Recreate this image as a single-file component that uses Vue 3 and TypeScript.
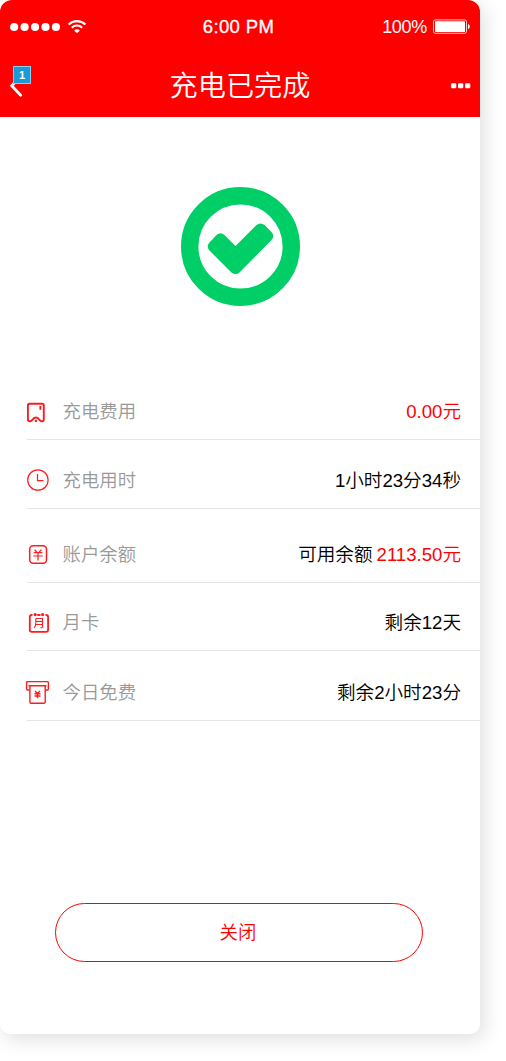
<script setup lang="ts">
interface Row {
  icon: 'bill' | 'clock' | 'yuan' | 'month' | 'free'
  label: string
  value: string
  amount: string
}

const rows: Row[] = [
  { icon: 'bill', label: '充电费用', value: '', amount: '0.00元' },
  { icon: 'clock', label: '充电用时', value: '1小时23分34秒', amount: '' },
  { icon: 'yuan', label: '账户余额', value: '可用余额', amount: '2113.50元' },
  { icon: 'month', label: '月卡', value: '剩余12天', amount: '' },
  { icon: 'free', label: '今日免费', value: '剩余2小时23分', amount: '' },
]
</script>

<template>
  <div class="page">
    <main class="phone">
      <header class="top">
        <div class="status">
          <div class="signal">
            <svg width="52" height="10" viewBox="0 0 52 10" fill="#fff">
              <circle v-for="n in 5" :key="n" :cx="n * 10.45 - 6.3" cy="5" r="4.1" />
            </svg>
            <svg width="18" height="14" viewBox="0 0 18 14" fill="none" stroke="#fff">
              <path d="M.6 4.6C5.4 0 12.600 0 17.400 4.600" stroke-width="2.100" />
              <path d="M3.800 7.700C6.800 4.900 11.200 4.900 14.200 7.700" stroke-width="2" />
              <path d="M6.200 10.400C7.800 8.900 10.200 8.900 11.800 10.400L9 13.300Z" fill="#fff" stroke="none" />
            </svg>
          </div>
          <span class="time">6:00 PM</span>
          <div class="power">
            <span class="percent">100%</span>
            <svg width="38" height="16" viewBox="0 0 38 16">
              <rect x=".5" y=".9" width="33" height="13.400" rx="1.800" fill="none" stroke="#fff" stroke-width=".8" />
              <rect x="2" y="2.300" width="30" height="10.700" rx=".6" fill="#fff" />
              <path d="M35 5C37.300 6 37.300 9.200 35 10.200Z" fill="#fff" />
            </svg>
          </div>
        </div>
        <div class="nav">
          <div class="back">
            <svg width="14" height="24" viewBox="0 0 14 24" fill="none" stroke="#fff" stroke-width="2.800" stroke-linecap="round">
              <path d="M11 3L2.700 11.800L11.700 21.200" />
            </svg>
            <span class="badge">1</span>
          </div>
          <h1>充电已完成</h1>
          <svg class="more" width="20" height="6" viewBox="0 0 20 6" fill="#fff">
            <rect x="0" y=".2" width="5.300" height="5" rx="1.200" />
            <rect x="7" y=".2" width="5.300" height="5" rx="1.200" />
            <rect x="14" y=".2" width="5.300" height="5" rx="1.200" />
          </svg>
        </div>
      </header>

      <svg class="done" width="120" height="120" viewBox="0 0 120 120">
        <circle cx="60.500" cy="59.500" r="50.800" fill="none" stroke="#00cf68" stroke-width="17.400" />
        <path d="M36.500 47.900Q40.500 44.600 44.500 47.900L55.500 58.900L76.500 38.100Q80.500 35 84.500 38.100L91.500 45.100Q95 49.100 91.500 53.100L59.500 85.400Q55.500 88.600 51.500 85.400L29.500 63.600Q26 59.600 29.500 55.600Z" fill="#00cf68" />
      </svg>

      <section class="rows">
        <div v-for="row in rows" :key="row.icon" class="row" :class="row.icon">
          <svg class="icon" width="26" height="26" viewBox="0 0 26 26" fill="none" stroke="#fc1c20">
            <template v-if="row.icon === 'bill'">
              <path d="M4.600 5.800H17Q18.800 5.800 18.800 7.600V21.500Q18.800 23.300 17 23.300H16.500Q15.500 23.300 14.500 21.900Q13 19.500 10.900 19.500Q8.800 19.500 7.300 21.900Q6.300 23.300 5.300 23.300H4.600Q2.900 23.300 2.900 21.500V7.600Q2.900 5.800 4.600 5.800Z" stroke-width="1.900" />
              <path d="M15.400 8V11.800" stroke-width="1.900" />
              <circle cx="10.900" cy="22.900" r="1.200" fill="#fc1c20" stroke="none" />
            </template>
            <template v-else-if="row.icon === 'clock'">
              <circle cx="12.900" cy="13" r="10.200" stroke-width="1.200" />
              <path d="M12.500 7V13.600H18.500" stroke-width="1.200" />
            </template>
            <template v-else-if="row.icon === 'yuan'">
              <rect x="4.700" y="4.800" width="16.800" height="17.500" rx="3.500" stroke-width="1.500" />
              <path d="M9.600 8.700L12 11.500M16.300 8.700L14 11.500M8.700 11.700H17.300M8.300 15H17.700M13 11.700V19.500" stroke-width="1.200" />
            </template>
            <template v-else-if="row.icon === 'month'">
              <path d="M7.500 6H7Q4.800 6 4.800 8.200V20.800Q4.800 22.900 7 22.900H21Q23.100 22.900 23.100 20.800V8.200Q23.100 6 21 6H20.500M12.300 6H15.500" stroke-width="1.800" />
              <circle cx="10.200" cy="5.600" r="1.600" fill="#fc1c20" stroke="none" />
              <circle cx="17.600" cy="5.600" r="1.600" fill="#fc1c20" stroke="none" />
              <path d="M10.800 9.500H17.500V17.800Q17.500 19 15.500 18.600M10.800 9.500V14Q10.800 17.300 9 19M10.800 12.500H17.500M10.800 15.500H17.500" stroke-width="1.100" />
            </template>
            <template v-else>
              <path d="M4.800 11H2.600Q1.600 11 1.600 10V3.600Q1.600 2.600 2.600 2.600H22.400Q23.400 2.600 23.400 3.600V10Q23.400 11 22.400 11H20.200" stroke-width="1.400" />
              <path d="M3.500 6.800H21.500M4.900 7V23Q4.900 24.300 6 24.300H19Q20.200 24.300 20.200 23V7" stroke-width="1.400" />
              <path d="M10 12L12.500 14.500L15 12M9.500 14.700H15.500M9.500 17H15.500M12.500 14.500V19.200" stroke-width="1.400" />
            </template>
          </svg>
          <span class="label">{{ row.label }}</span>
          <span class="value">
            <span v-if="row.value">{{ row.value }}</span>
            <span v-if="row.amount" class="amount">{{ row.amount }}</span>
          </span>
        </div>
      </section>

      <button class="close" type="button"><span>关闭</span></button>
    </main>
  </div>
</template>

<style>
body {
  margin: 0;
  background: #fff;
}
</style>

<style scoped>
.page {
  height: 1061px;
  overflow: hidden;
}

.phone {
  width: 480px;
  height: 1034px;
  border-radius: 10px;
  background: #fff;
  box-shadow: 4px 5px 20px rgba(0, 0, 0, 0.13);
  font-family: "Liberation Sans", "Noto Sans CJK SC", sans-serif;
  font-size: 18.4px;
  display: flex;
  flex-direction: column;
}

.top {
  height: 117px;
  border-radius: 12px 12px 0 0;
  background: #f00;
  color: #fff;
}

.status {
  display: grid;
  grid-template-columns: 1fr auto 1fr;
  align-items: center;
  height: 54px;
  padding: 0 10px;
}

.signal {
  display: flex;
  align-items: center;
  gap: 6px;
}

.time {
  font-size: 18.5px;
  letter-spacing: 0.35px;
  margin-left: -3px;
  -webkit-text-stroke: 0.3px #fff;
}

.power {
  display: flex;
  justify-content: flex-end;
  align-items: center;
  gap: 6px;
  margin-right: -1px;
}

.percent {
  font-size: 18px;
  letter-spacing: -0.3px;
}

.nav {
  display: grid;
  grid-template-columns: 1fr auto 1fr;
  align-items: center;
  height: 63px;
  padding: 0 9px;
}

.back {
  position: relative;
  height: 24px;
}

.badge {
  position: absolute;
  left: 4px;
  top: -8px;
  box-sizing: border-box;
  width: 18px;
  height: 18px;
  border: 1px solid #8fd0f2;
  background: #1a9bd7;
  font-size: 11px;
  font-weight: 700;
  line-height: 16px;
  text-align: center;
}

h1 {
  margin: 0;
  font-size: 28.2px;
  font-weight: 350;
  line-height: 40px;
}

.more {
  justify-self: end;
}

.done {
  margin: 70px 0 0 180px;
}

.rows {
  margin: 76px 0 0 27px;
}

.row {
  display: flex;
  align-items: center;
  height: 56px;
  border-bottom: 1px solid #e4e4e4;
  line-height: 28px;
  font-weight: 350;
}

.clock {
  margin-top: 12px;
}

.yuan {
  margin-top: 17px;
}

.month {
  margin-top: 11px;
}

.free {
  margin-top: 13px;
}

.icon {
  flex: none;
  margin: 0 11.5px 0 -2px;
}

.label {
  padding-top: 2px;
  color: #999;
}

.value {
  display: flex;
  gap: 4px;
  margin-left: auto;
  padding: 2px 19px 0 0;
  font-size: 18.6px;
  color: #000;
}

.amount {
  color: #f00;
}

.close {
  box-sizing: border-box;
  width: 368px;
  height: 59px;
  margin: 182px 0 0 55px;
  padding: 0 2px 3px 0;
  border: 1px solid #f00;
  border-radius: 30px;
  background: #fff;
  color: #f00;
  font: inherit;
  font-weight: 350;
}
</style>
